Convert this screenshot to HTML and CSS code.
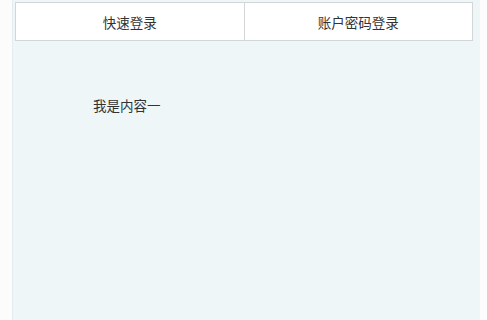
FILE: index.html
```html
<!DOCTYPE html>
<html>
<head>
<meta charset="utf-8">
<link rel="stylesheet" href="styles.css">
</head>
<body>
<div class="panel">
  <div class="tabs">
    <div class="tab">快速登录</div>
    <div class="tab">账户密码登录</div>
  </div>
  <div class="content">我是内容一</div>
</div>
</body>
</html>
```
FILE: styles.css
```css
html, body {
  margin: 0;
  padding: 0;
  background: #fdfcfd;
  font-family: "Noto Sans CJK SC", "Liberation Sans", sans-serif;
}
.panel {
  margin-left: 12px;
  width: 468px;
  height: 320px;
  background: #eef6f8;
  border-left: 1px solid #e3ecee;
  box-sizing: border-box;
  padding-top: 2px;
}
.tabs {
  display: flex;
  margin-left: 2px;
  width: 458px;
  height: 39px;
  box-sizing: border-box;
  border: 1px solid #d3d6d7;
  background: #ffffff;
}
.tab {
  flex: 1;
  display: flex;
  align-items: center;
  justify-content: center;
  font-size: 13.5px;
  color: #333;
}
.tab + .tab {
  border-left: 1px solid #d3d6d7;
}
.content {
  padding: 54px 0 0 80px;
  font-size: 13.5px;
  color: #333;
}
```
